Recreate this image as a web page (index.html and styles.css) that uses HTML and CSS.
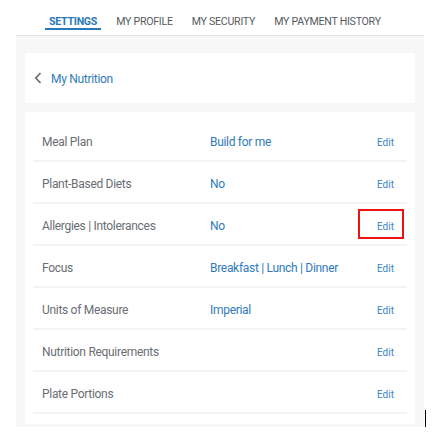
FILE: index.html
```html
<!DOCTYPE html>
<html>
<head>
<meta charset="utf-8">
<link rel="stylesheet" href="styles.css">
</head>
<body>
<div class="page">
  <nav class="tabs">
    <a class="tab active">SETTINGS</a>
    <a class="tab">MY PROFILE</a>
    <a class="tab">MY SECURITY</a>
    <a class="tab">MY PAYMENT HISTORY</a>
  </nav>
  <main class="content">
    <div class="card head">
      <svg class="chev" width="8" height="12" viewBox="0 0 8 12"><path d="M6.5 1 L1.8 6 L6.5 11" fill="none" stroke="#6b7178" stroke-width="1.8"/></svg>
      <span class="head-title">My Nutrition</span>
    </div>
    <div class="card list">
      <div class="row"><span class="label">Meal Plan</span><span class="value">Build for me</span><span class="edit">Edit</span></div>
      <div class="row"><span class="label">Plant-Based Diets</span><span class="value">No</span><span class="edit">Edit</span></div>
      <div class="row"><span class="label">Allergies | Intolerances</span><span class="value">No</span><span class="edit highlight">Edit</span></div>
      <div class="row"><span class="label">Focus</span><span class="value">Breakfast | Lunch | Dinner</span><span class="edit">Edit</span></div>
      <div class="row"><span class="label">Units of Measure</span><span class="value">Imperial</span><span class="edit">Edit</span></div>
      <div class="row"><span class="label">Nutrition Requirements</span><span class="value"></span><span class="edit">Edit</span></div>
      <div class="row"><span class="label">Plate Portions</span><span class="value"></span><span class="edit">Edit</span></div>
    </div>
  </main>
  <div class="cursor"></div>
</div>
</body>
</html>
```
FILE: styles.css
```css
html, body {
  margin: 0;
  padding: 0;
  background: #ffffff;
}
body {
  font-family: Roboto, "Liberation Sans", sans-serif;
}
.page {
  position: relative;
  margin: 0 9px 0 16px;
  width: 408px;
}
.tabs {
  height: 36px;
  border-bottom: 1px solid #e4e4e4;
  display: flex;
  align-items: flex-start;
  padding-left: 29px;
  gap: 19px;
  box-sizing: border-box;
}
.tab {
  font-size: 10.6px;
  color: #555a60;
  padding-top: 16px;
  line-height: 12px;
  letter-spacing: -0.25px;
  display: block;
}
.tab.active {
  color: #2a78b8;
  font-weight: bold;
  border-bottom: 2px solid #2a78b8;
  padding: 16px 4px 0;
  margin-right: -4px;
  height: 12px;
}
.content {
  background: #f7f7f7;
  padding: 17px 9px 5px;
  height: 391px;
  box-sizing: border-box;
}
.card {
  background: #ffffff;
}
.head {
  height: 50px;
  display: flex;
  align-items: center;
  padding-left: 9px;
  margin-bottom: 9px;
}
.chev {
  margin-right: 9px;
}
.head-title {
  font-size: 12px;
  color: #2f7bbd;
  letter-spacing: -0.3px;
  padding-top: 2px;
}
.list {
  padding: 8px 8px 10px;
}
.row {
  display: grid;
  grid-template-columns: 177px 1fr 46px;
  align-items: center;
  height: 40px;
  border-bottom: 2px solid #f3f3f3;
  padding-right: 3px;
}
.label {
  padding-left: 9px;
  padding-top: 4px;
  font-size: 12px;
  color: #6a6e73;
  letter-spacing: -0.3px;
}
.value {
  padding-top: 4px;
  font-size: 12px;
  color: #2f7bbd;
  letter-spacing: -0.3px;
}
.edit {
  font-size: 10px;
  color: #3b84c4;
  height: 30px;
  line-height: 26px;
  padding-top: 3px;
  padding-left: 17px;
  box-sizing: border-box;
  border: 2px solid transparent;
}
.edit.highlight {
  border-color: #ee1111;
}
.cursor {
  position: absolute;
  left: 409px;
  top: 410px;
  width: 1px;
  height: 18px;
  background: #000;
}
```
